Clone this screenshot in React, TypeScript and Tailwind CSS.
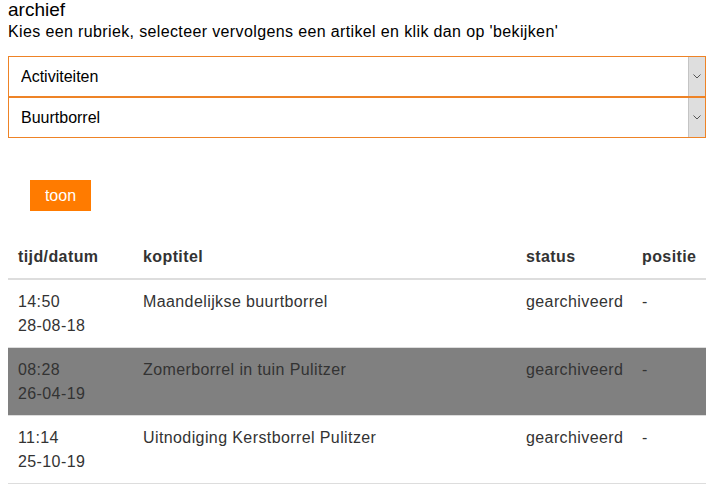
import React from "react";

const rows = [
    {time: "14:50", date: "28-08-18", title: "Maandelijkse buurtborrel", status: "gearchiveerd", pos: "-", active: false},
    {time: "08:28", date: "26-04-19", title: "Zomerborrel in tuin Pulitzer", status: "gearchiveerd", pos: "-", active: true},
    {time: "11:14", date: "25-10-19", title: "Uitnodiging Kerstborrel Pulitzer", status: "gearchiveerd", pos: "-", active: false},
];

function Select({value}: {value: string}) {
    return (
        <div className="relative h-[41px] border border-[#ee8326] bg-white">
            <select
                className="w-full h-full appearance-none bg-transparent pl-3 text-[16px] text-black outline-none"
                defaultValue={value}>
                <option>{value}</option>
            </select>
            <div className="pointer-events-none absolute right-0 top-0 bottom-0 w-[17px] flex items-center justify-center bg-[#dedede] border-l border-[#c4c4c4]">
                <svg width="8" height="5" viewBox="0 0 8 5" fill="none" stroke="#555" strokeWidth="1">
                    <path d="M0.5 0.5 L4 4 L7.5 0.5"/>
                </svg>
            </div>
        </div>
    );
}

export default function App() {
    return (
        <div className="min-h-screen bg-white px-2 text-[#333] font-['Liberation_Sans',Arial,sans-serif]">
            <h2 className="-mt-px text-[19px] leading-[22px] text-black">archief</h2>
            <p className="mt-[2px] text-[16px] leading-[18px] tracking-[0.37px] text-black">
                Kies een rubriek, selecteer vervolgens een artikel en klik dan op 'bekijken'
            </p>

            <div className="mt-[15px] mr-[2px] flex flex-col">
                <Select value="Activiteiten"/>
                <Select value="Buurtborrel"/>
            </div>

            <div className="mt-[42px] pl-[22px]">
                <button className="w-[61px] h-[31px] bg-[#ff7b00] text-white text-[16px]" type="button">
                    toon
                </button>
            </div>

            <table className="mt-[23px] w-[698px] table-fixed border-collapse text-[16px] leading-6 tracking-[0.4px]">
                <colgroup>
                    <col className="w-[125px]"/>
                    <col className="w-[383px]"/>
                    <col className="w-[116px]"/>
                    <col className="w-[74px]"/>
                </colgroup>
                <thead>
                    <tr className="border-b-2 border-[#dddddd] text-left">
                        <th className="px-[10px] pt-[11px] pb-[9px] font-bold">tijd/datum</th>
                        <th className="px-[10px] pt-[11px] pb-[9px] font-bold">koptitel</th>
                        <th className="px-[10px] pt-[11px] pb-[9px] font-bold">status</th>
                        <th className="px-[10px] pt-[11px] pb-[9px] font-bold">positie</th>
                    </tr>
                </thead>
                <tbody>
                    {rows.map((r) => (
                        <tr key={r.time} className={r.active ? "bg-[#808080] border-b border-[#dddddd]" : "border-b border-[#dddddd]"}>
                            <td className="px-[10px] pt-[10px] pb-[9px] align-top">
                                {r.time}
                                <br/>
                                {r.date}
                            </td>
                            <td className="px-[10px] pt-[10px] pb-[9px] align-top">{r.title}</td>
                            <td className="px-[10px] pt-[10px] pb-[9px] align-top">{r.status}</td>
                            <td className="px-[10px] pt-[10px] pb-[9px] align-top">{r.pos}</td>
                        </tr>
                    ))}
                </tbody>
            </table>
        </div>
    );
}
